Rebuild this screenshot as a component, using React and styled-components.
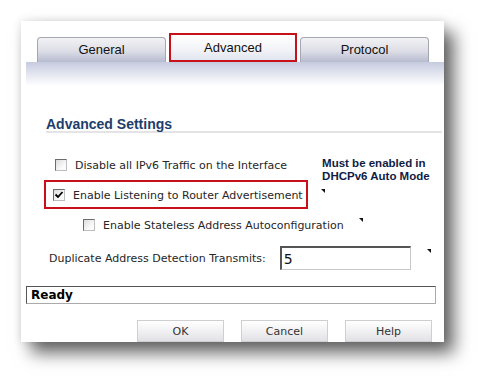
import React from "react";
import styled, { createGlobalStyle } from "styled-components";

const GlobalStyle = createGlobalStyle`
  body {
    margin: 0;
    background: #fff;
    font-family: "DejaVu Sans", Tahoma, sans-serif;
  }
`;

function Header() {
  return (
    <TabBar>
      <Tab>General</Tab>
      <Tab $active>Advanced</Tab>
      <Tab>Protocol</Tab>
    </TabBar>
  );
}

function CheckRow({ checked, label }) {
  return (
    <>
      <Box>
        {checked && (
          <svg width="10" height="10" viewBox="0 0 10 10">
            <path d="M1.5 4.5 L4 7 L8.5 2" stroke="#000" strokeWidth="1.8" fill="none" />
          </svg>
        )}
      </Box>
      <Label>{label}</Label>
    </>
  );
}

export default function App() {
  return (
    <Page>
      <GlobalStyle />
      <Window>
        <Header />
        <Band />
        <SectionTitle>Advanced Settings</SectionTitle>
        <Options>
          <Line $top={24}>
            <Field $indent={11}>
              <CheckRow label="Disable all IPv6 Traffic on the Interface" />
            </Field>
            <Note>
              Must be enabled in
              <br />
              DHCPv6 Auto Mode
            </Note>
          </Line>
          <Line $top={7}>
            <Field $indent={9} $highlight>
              <CheckRow checked label="Enable Listening to Router Advertisement" />
            </Field>
            <Marker $left={13} $down={9} />
          </Line>
          <Line $top={8}>
            <Field $indent={39}>
              <CheckRow label="Enable Stateless Address Autoconfiguration" />
            </Field>
            <Marker $left={15} $down={1} />
          </Line>
          <Line $top={13}>
            <Field $indent={5}>
              <Label>Duplicate Address Detection Transmits:</Label>
              <NumberBox>5</NumberBox>
            </Field>
            <Marker $left={16} $down={3} />
          </Line>
        </Options>
        <StatusBar>Ready</StatusBar>
        <ButtonRow>
          <Button>OK</Button>
          <Button>Cancel</Button>
          <Button>Help</Button>
        </ButtonRow>
      </Window>
    </Page>
  );
}

const Page = styled.div`
  width: 486px;
  height: 385px;
  box-sizing: border-box;
  padding: 21px 0 0 21px;
  overflow: hidden;
`;

const Window = styled.div`
  width: 423px;
  height: 321px;
  background: #fff;
  display: flex;
  flex-direction: column;
  box-shadow: 10px 11px 16px rgba(0, 0, 0, 0.6), 0 0 9px rgba(0, 0, 0, 0.12);
`;

const TabBar = styled.div`
  display: flex;
  align-items: flex-end;
  gap: 3px;
  height: 29px;
  padding: 12px 0 0 16px;
`;

const Tab = styled.div`
  box-sizing: border-box;
  width: ${(p) => (p.$active ? "128px" : "129px")};
  height: ${(p) => (p.$active ? "29px" : "25px")};
  display: flex;
  align-items: center;
  justify-content: center;
  font-family: "Liberation Sans", Arial, sans-serif;
  font-size: 13px;
  color: #111;
  border: ${(p) => (p.$active ? "2px solid #c8101a" : "1px solid #a4a6b2")};
  border-bottom: ${(p) => (p.$active ? "2px solid #c8101a" : "none")};
  border-radius: ${(p) => (p.$active ? "0" : "4px 4px 0 0")};
  background: ${(p) =>
    p.$active
      ? "linear-gradient(#ffffff, #f2f3f8 60%, #e2e4ef)"
      : "linear-gradient(#f3f3f5, #dcdde6 55%, #b7bbcf)"};
  padding-bottom: ${(p) => (p.$active ? "1px" : "2px")};
`;

const Band = styled.div`
  margin-left: 5px;
  height: 25px;
  background: linear-gradient(#c6cadf, #e3e6f0 50%, #ffffff);
`;

const SectionTitle = styled.div`
  margin: 32px 2px 0 25px;
  font-family: "Liberation Sans", Arial, sans-serif;
  font-weight: bold;
  font-size: 14px;
  line-height: 13px;
  color: #1d3d6b;
  border-bottom: 2px solid #e4e4e6;
`;

const Options = styled.div`
  display: flex;
  flex-direction: column;
  padding-left: 23px;
`;

const Line = styled.div`
  display: flex;
  align-items: flex-start;
  margin-top: ${(p) => p.$top}px;
`;

const Field = styled.div`
  box-sizing: border-box;
  display: flex;
  align-items: center;
  padding-left: ${(p) => (p.$highlight ? p.$indent - 2 : p.$indent)}px;
  padding-right: ${(p) => (p.$highlight ? "3px" : "0")};
  height: ${(p) => (p.$highlight ? "29px" : "auto")};
  border: ${(p) => (p.$highlight ? "2px solid #c8101a" : "none")};
`;

const Box = styled.span`
  box-sizing: border-box;
  width: 12px;
  height: 12px;
  display: flex;
  align-items: center;
  justify-content: center;
  border: 1px solid;
  border-color: #6c6c6c #bdbdbd #bdbdbd #6c6c6c;
  background: linear-gradient(135deg, #dcdcdc, #fbfbfb 70%);
  margin-right: 8px;
`;

const Label = styled.span`
  font-size: 11px;
  line-height: 14px;
  padding-top: 2px;
  color: #262626;
  white-space: nowrap;
`;

const Note = styled.div`
  height: 14px;
  margin-left: 35px;
  font-family: "Liberation Sans", Arial, sans-serif;
  font-weight: bold;
  font-size: 11.5px;
  line-height: 13px;
  color: #101c44;
  white-space: nowrap;
`;

const Marker = styled.span`
  width: 0;
  height: 0;
  margin-left: ${(p) => p.$left}px;
  margin-top: ${(p) => p.$down}px;
  border-top: 4px solid #111;
  border-left: 4px solid transparent;
`;

const NumberBox = styled.div`
  box-sizing: border-box;
  width: 131px;
  height: 24px;
  margin-left: 14px;
  padding: 2px 0 0 2px;
  border: 1px solid;
  border-width: 2px 1px 1px 2px;
  border-color: #555 #c8c8c8 #c8c8c8 #555;
  background: #fff;
  font-size: 14px;
  line-height: 18px;
  color: #111;
`;

const StatusBar = styled.div`
  box-sizing: border-box;
  margin: 16px 0 0 5px;
  width: 410px;
  height: 18px;
  padding-left: 4px;
  border: 1px solid;
  border-color: #555 #aaa #aaa #555;
  font-weight: bold;
  font-size: 12px;
  line-height: 16px;
  color: #000;
`;

const ButtonRow = styled.div`
  display: flex;
  justify-content: flex-end;
  gap: 17px;
  margin-top: 16px;
  padding-right: 12px;
`;

const Button = styled.div`
  box-sizing: border-box;
  width: 87px;
  height: 22px;
  display: flex;
  align-items: center;
  justify-content: center;
  border: 1px solid #cfcfd2;
  background: linear-gradient(#ffffff, #f1f1f3 50%, #e2e2e6);
  font-size: 11px;
  color: #333;
`;
